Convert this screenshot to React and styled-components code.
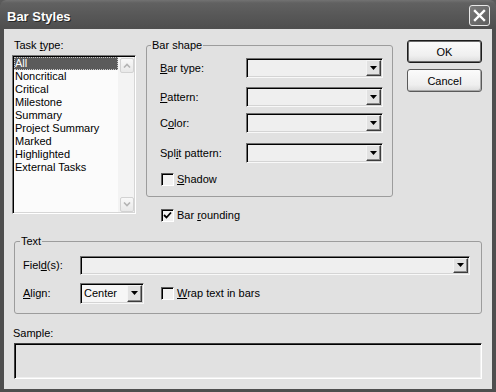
import React from 'react';
import styled, { createGlobalStyle } from 'styled-components';

const Global = createGlobalStyle`
  html, body { margin: 0; padding: 0; background: #5a5a5a; }
  body { font-family: "Liberation Sans", Arial, sans-serif; font-size: 11px; color: #000; }
  * { box-sizing: border-box; }
  u { text-decoration: underline; text-underline-offset: 1px; }
`;

const Window = styled.div`
  width: 496px;
  height: 392px;
  display: flex;
  flex-direction: column;
  background: #4e4e4e;
  border-radius: 6px 6px 0 0;
  overflow: hidden;
`;

const TitleBar = styled.div`
  height: 29px;
  flex: none;
  display: flex;
  align-items: flex-start;
  justify-content: space-between;
  padding: 5px 6px 0 7px;
  background: linear-gradient(#727272 0, #616161 3px, #585858 50%, #4e4e4e 100%);
`;

const Title = styled.span`
  font: bold 13px "Liberation Sans", Arial, sans-serif;
  line-height: 16px;
  margin-top: 4px;
  color: #fff;
  text-shadow: 1px 1px 0 #262626;
`;

const CloseButton = styled.div`
  width: 21px;
  height: 21px;
  border: 1px solid #e8e8e8;
  border-radius: 3px;
  background: linear-gradient(135deg, #7a7a7a, #5e5e5e);
  display: flex;
  align-items: center;
  justify-content: center;
`;

const Body = styled.div`
  flex: 1;
  margin: 0 4px 3px;
  background: #e1e1e1;
  padding: 10px 10px 0 8px;
  display: flex;
  flex-direction: column;
`;

const TopSection = styled.div`
  display: flex;
  align-items: flex-start;
`;

const ListColumn = styled.div`
  width: 124px;
  display: flex;
  flex-direction: column;
`;

const MiddleColumn = styled.div`
  width: 247px;
  margin-left: 10px;
  display: flex;
  flex-direction: column;
`;

const ButtonColumn = styled.div`
  width: 75px;
  margin-left: 14px;
  margin-top: 1px;
  display: flex;
  flex-direction: column;
  gap: 6px;
`;

const Label = styled.div`
  line-height: 13px;
  height: 13px;
  white-space: nowrap;
  margin-left: ${p => p.$ml || 0}px;
  margin-top: ${p => p.$mt || 0}px;
  width: ${p => (p.$w ? `${p.$w}px` : 'auto')};
  flex: none;
`;

const ListBox = styled.div`
  margin-top: 3px;
  height: 159px;
  display: flex;
  background: #fbfbfb;
  border: 1px solid;
  border-color: #777 #fff #fff #777;
  box-shadow: inset 1px 1px 0 #000, inset -1px -1px 0 #d6d6d6;
  padding: 1px;
`;

const Items = styled.div`
  flex: 1;
  display: flex;
  flex-direction: column;
`;

const Item = styled.div`
  height: 13px;
  line-height: 13px;
  padding-left: 1px;
  white-space: nowrap;
  color: ${p => (p.$selected ? '#fff' : '#000')};
  background: ${p => (p.$selected ? '#5b5b5b' : 'transparent')};
  outline: ${p => (p.$selected ? '1px dotted #c8c8c8' : 'none')};
  outline-offset: -1px;
`;

const ScrollBar = styled.div`
  width: 16px;
  background: #f3f3f3;
  display: flex;
  flex-direction: column;
  justify-content: space-between;
  padding: 1px 0 0 2px;
`;

const ScrollButton = styled.div`
  width: 14px;
  height: 15px;
  border: 1px solid #d2d2d2;
  border-radius: 2px;
  background: linear-gradient(#f8f8f8, #e8e8e8);
  display: flex;
  align-items: center;
  justify-content: center;
`;

const GroupBox = styled.fieldset`
  margin: 0;
  margin-left: ${p => p.$ml || 0}px;
  margin-top: ${p => p.$mt || 0}px;
  padding: 0;
  min-width: 0;
  border: 1px solid #9c9c9c;
  border-radius: 3px;
`;

const Legend = styled.legend`
  margin-left: ${p => p.$ml}px;
  padding: 0 1px;
  line-height: 13px;
  height: 13px;
`;

const GroupContent = styled.div`
  padding: ${p => p.$pad};
  display: flex;
  flex-direction: column;
`;

const FormRow = styled.div`
  display: flex;
  align-items: center;
  height: 20px;
  margin-top: ${p => p.$mt || 0}px;
`;

const Combo = styled.div`
  width: ${p => (p.$w ? `${p.$w}px` : 'auto')};
  flex: ${p => (p.$w ? 'none' : '1')};
  height: ${p => p.$h || 20}px;
  display: flex;
  align-items: stretch;
  background: ${p => (p.$white ? '#fbfbfb' : '#efefef')};
  border: 1px solid;
  border-color: #707070 #f8f8f8 #f8f8f8 #707070;
  box-shadow: inset 1px 1px 0 #000, inset -1px -1px 0 #d4d4d4;
  padding: 1px;
`;

const ComboText = styled.span`
  flex: 1;
  padding-left: 2px;
  line-height: 16px;
  background: #f6f6f6;
`;

const DropButton = styled.div`
  width: 15px;
  margin-left: auto;
  flex: none;
  display: flex;
  align-items: center;
  justify-content: center;
  background: #e2e2e2;
  border: 1px solid;
  border-color: #f4f4f4 #3c3c3c #3c3c3c #f4f4f4;
  box-shadow: inset -1px -1px 0 #8a8a8a;
`;

const CheckRow = styled.div`
  display: flex;
  align-items: center;
  height: 13px;
  margin-top: ${p => p.$mt || 0}px;
  margin-left: ${p => p.$ml || 0}px;
`;

const CheckBox = styled.div`
  width: 13px;
  height: 13px;
  flex: none;
  background: #f2f2f2;
  border: 1px solid;
  border-color: #5c5c5c #fff #fff #5c5c5c;
  box-shadow: inset 1px 1px 0 #000;
  display: flex;
  align-items: center;
  justify-content: center;
  margin-right: 3px;
`;

const Button = styled.div`
  height: 23px;
  display: flex;
  align-items: center;
  justify-content: center;
  border-radius: 3px;
  background: linear-gradient(#fbfbfb, #efefef 70%, #dcdcdc);
  border: 1px solid ${p => (p.$default ? '#1c1c1c' : '#5a5a5a')};
  box-shadow: ${p =>
    p.$default
      ? 'inset 0 0 0 1px #6a6a6a'
      : 'inset -1px -1px 0 #a8a8a8'};
`;

const SampleBox = styled.div`
  margin: 3px 0 0 2px;
  height: 36px;
  background: #e1e1e1;
  border: 1px solid;
  border-color: #404040 #fff #fff #404040;
  box-shadow: inset 1px 1px 0 #000, inset -1px -1px 0 #efefef;
`;

const DownArrow = () => (
  <svg width="7" height="4" viewBox="0 0 7 4">
    <path d="M0 0h7L3.5 4z" fill="#000" />
  </svg>
);

const Chevron = ({ up }) => (
  <svg width="8" height="5" viewBox="0 0 8 5">
    <path
      d={up ? 'M1 4.5L4 1.5L7 4.5' : 'M1 0.5L4 3.5L7 0.5'}
      fill="none"
      stroke="#b4b4b4"
      strokeWidth="1.6"
    />
  </svg>
);

const Check = () => (
  <svg width="9" height="9" viewBox="0 0 9 9">
    <path d="M1 4l2.5 2.5L8 1.5" fill="none" stroke="#000" strokeWidth="1.8" />
  </svg>
);

const taskTypes = [
  'All',
  'Noncritical',
  'Critical',
  'Milestone',
  'Summary',
  'Project Summary',
  'Marked',
  'Highlighted',
  'External Tasks',
];

const shapeRows = [
  { label: <><u>B</u>ar type:</>, mt: 6 },
  { label: <><u>P</u>attern:</>, mt: 9 },
  { label: <>C<u>o</u>lor:</>, mt: 6 },
  { label: <>Spl<u>i</u>t pattern:</>, mt: 10 },
];

export default function App() {
  return (
    <>
      <Global />
      <Window>
        <TitleBar>
          <Title>Bar Styles</Title>
          <CloseButton>
            <svg width="13" height="13" viewBox="0 0 13 13">
              <path d="M2 2L11 11M11 2L2 11" stroke="#fff" strokeWidth="2.4" strokeLinecap="square" />
            </svg>
          </CloseButton>
        </TitleBar>
        <Body>
          <TopSection>
            <ListColumn>
              <Label $ml={2}>Task <u>t</u>ype:</Label>
              <ListBox>
                <Items>
                  {taskTypes.map((t, i) => (
                    <Item key={t} $selected={i === 0}>{t}</Item>
                  ))}
                </Items>
                <ScrollBar>
                  <ScrollButton><Chevron up /></ScrollButton>
                  <ScrollButton><Chevron /></ScrollButton>
                </ScrollBar>
              </ListBox>
            </ListColumn>
            <MiddleColumn>
              <GroupBox>
                <Legend $ml={4}>Bar shape</Legend>
                <GroupContent $pad="0 9px 10px 13px">
                  {shapeRows.map((r, i) => (
                    <FormRow key={i} $mt={r.mt}>
                      <Label $w={86}>{r.label}</Label>
                      <Combo $w={137}>
                        <DropButton><DownArrow /></DropButton>
                      </Combo>
                    </FormRow>
                  ))}
                  <CheckRow $mt={10} $ml={1}>
                    <CheckBox />
                    <Label><u>S</u>hadow</Label>
                  </CheckRow>
                </GroupContent>
              </GroupBox>
              <CheckRow $mt={12} $ml={15}>
                <CheckBox><Check /></CheckBox>
                <Label>Bar <u>r</u>ounding</Label>
              </CheckRow>
            </MiddleColumn>
            <ButtonColumn>
              <Button $default>OK</Button>
              <Button>Cancel</Button>
            </ButtonColumn>
          </TopSection>

          <GroupBox $ml={2} $mt={13}>
            <Legend $ml={5}>Text</Legend>
            <GroupContent $pad="7px 11px 10px 8px">
              <FormRow>
                <Label $w={57}>Fiel<u>d</u>(s):</Label>
                <Combo $h={19}>
                  <DropButton><DownArrow /></DropButton>
                </Combo>
              </FormRow>
              <FormRow $mt={8}>
                <Label $w={57}><u>A</u>lign:</Label>
                <Combo $w={64} $h={21} $white>
                  <ComboText>Center</ComboText>
                  <DropButton><DownArrow /></DropButton>
                </Combo>
                <CheckRow $ml={17}>
                  <CheckBox />
                  <Label><u>W</u>rap text in bars</Label>
                </CheckRow>
              </FormRow>
            </GroupContent>
          </GroupBox>

          <Label $ml={1} $mt={13}>Sample:</Label>
          <SampleBox />
        </Body>
      </Window>
    </>
  );
}
